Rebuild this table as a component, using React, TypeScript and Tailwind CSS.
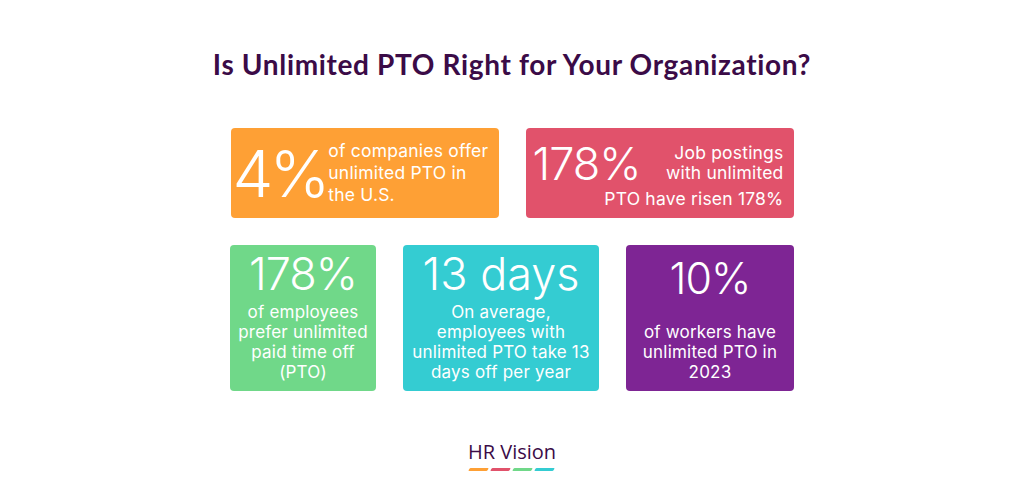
import React from "react";

const body = { fontFamily: "Inter, 'Noto Sans', sans-serif" };

export default function App() {
  return (
    <div className="w-[1024px] h-[491px] bg-white flex flex-col items-center overflow-hidden">
      <h1
        className="mt-[47px] text-[28px] leading-[34px] font-bold text-[#3b0b47] tracking-[0.65px]"
        style={{ fontFamily: "Lato, sans-serif" }}
      >
        Is Unlimited PTO Right for Your Organization?
      </h1>

      <div className="mt-[47px] flex gap-[27px] text-white whitespace-nowrap" style={body}>
        <div className="w-[268px] h-[90px] rounded-[4px] bg-[#fea035] flex items-center pl-[2px]">
          <div className="shrink-0 text-[65px] leading-none font-light tracking-[-4px]">4%</div>
          <div className="shrink-0 ml-[2px] text-[17.5px] leading-[22px] font-normal tracking-[0.2px]">
            of companies offer
            <br />
            unlimited PTO in
            <br />
            the U.S.
          </div>
        </div>
        <div className="w-[268px] h-[90px] rounded-[4px] bg-[#e1526b] flex flex-col pt-[15px] pr-[10px] pl-[7px]">
          <div className="flex items-start justify-between">
            <div className="text-[45px] leading-[44px] font-light tracking-[-1px] -mt-[1px]">178%</div>
            <div className="text-[17.5px] leading-[20px] text-right tracking-[0.2px]">
              Job postings
              <br />
              with unlimited
            </div>
          </div>
          <div className="text-[17.5px] leading-[20px] text-right mt-[3px] tracking-[0.2px]">PTO have risen 178%</div>
        </div>
      </div>

      <div className="mt-[27px] flex gap-[27px] text-white text-center whitespace-nowrap" style={body}>
        <div className="w-[146px] h-[146px] rounded-[4px] bg-[#70d889] flex flex-col items-center pt-[5px]">
          <div className="text-[45px] leading-[48px] font-light tracking-[-1px]">178%</div>
          <div className="mt-[4px] text-[17px] leading-[20px] tracking-[0.2px]">
            of employees
            <br />
            prefer unlimited
            <br />
            paid time off
            <br />
            (PTO)
          </div>
        </div>
        <div className="w-[196px] h-[146px] rounded-[4px] bg-[#34ccd2] flex flex-col items-center pt-[5px]">
          <div className="text-[45px] leading-[48px] font-light">13 days</div>
          <div className="mt-[4px] text-[17px] leading-[20px] tracking-[0.2px]">
            On average,
            <br />
            employees with
            <br />
            unlimited PTO take 13
            <br />
            days off per year
          </div>
        </div>
        <div className="w-[168px] h-[146px] rounded-[4px] bg-[#7e2594] flex flex-col items-center pt-[10px]">
          <div className="text-[43px] leading-[46px] font-light tracking-[-1px]">10%</div>
          <div className="mt-[21px] text-[17px] leading-[20px] tracking-[0.2px]">
            of workers have
            <br />
            unlimited PTO in
            <br />
            2023
          </div>
        </div>
      </div>

      <div className="mt-[50px] flex flex-col items-center">
        <div
          className="text-[20px] leading-[22px] text-[#3b0b47] font-medium"
          style={{ fontFamily: "'Open Sans', sans-serif" }}
        >
          HR Vision
        </div>
        <div className="mt-[5px] flex gap-[3px]">
          {["#fea035", "#e1526b", "#70d889", "#34ccd2"].map((c) => (
            <div key={c} className="w-[19px] h-[3px] -skew-x-[30deg] rounded-[1px]" style={{ backgroundColor: c }} />
          ))}
        </div>
      </div>
    </div>
  );
}
